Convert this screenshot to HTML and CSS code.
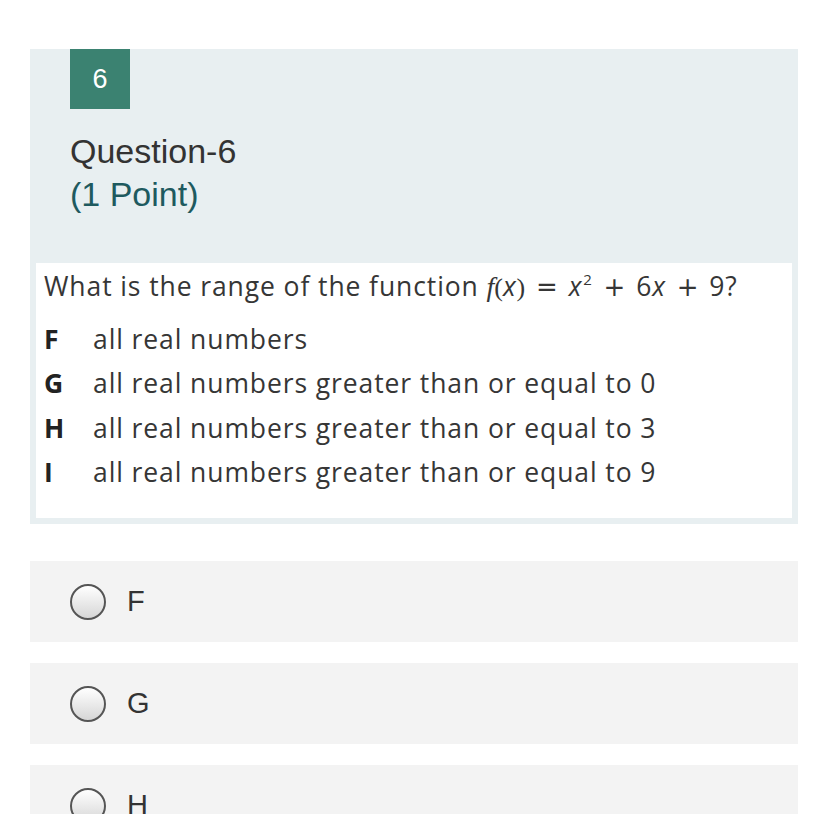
FILE: index.html
```html
<!DOCTYPE html>
<html>
<head>
<meta charset="utf-8">
<link rel="stylesheet" href="styles.css">
</head>
<body>
<div class="card">
  <div class="badge">6</div>
  <div class="title">
    <div class="qname">Question-6</div>
    <div class="points">(1 Point)</div>
  </div>
  <div class="figure">
    <div class="stem">What is the range of the function <span class="mf">f</span><span class="mp">(</span><span class="mx">x</span><span class="mp">)</span> <span class="op">=</span> <span class="mx">x</span><sup class="sq">2</sup> <span class="op">+</span> 6<span class="mx">x</span> <span class="op">+</span> 9?</div>
    <div class="choices">
      <div class="choice"><span class="key">F</span><span>all real numbers</span></div>
      <div class="choice"><span class="key">G</span><span>all real numbers greater than or equal to 0</span></div>
      <div class="choice"><span class="key">H</span><span>all real numbers greater than or equal to 3</span></div>
      <div class="choice"><span class="key">I</span><span>all real numbers greater than or equal to 9</span></div>
    </div>
  </div>
</div>
<div class="options">
  <div class="option"><span class="radio"></span><span class="label">F</span></div>
  <div class="option"><span class="radio"></span><span class="label">G</span></div>
  <div class="option"><span class="radio"></span><span class="label">H</span></div>
  <div class="option"><span class="radio"></span><span class="label">I</span></div>
</div>
</body>
</html>
```
FILE: styles.css
```css
html, body {
  margin: 0;
  padding: 0;
  background: #ffffff;
}
body {
  font-family: "Liberation Sans", Arial, sans-serif;
  color: #333333;
  width: 813px;
  overflow: hidden;
}
.card {
  margin: 49px 0 0 30px;
  width: 768px;
  background: #e8eff1;
  padding-bottom: 6px;
}
.badge {
  margin-left: 40px;
  width: 60px;
  height: 60px;
  background: #3b8271;
  color: #ffffff;
  font-size: 27px;
  display: flex;
  align-items: center;
  justify-content: center;
}
.title {
  margin: 21px 40px 0;
  font-size: 34px;
  line-height: 43px;
}
.qname {
  color: #333333;
}
.points {
  color: #1e5a5f;
}
.figure {
  margin: 47px 6px 0;
  height: 255px;
  background: #ffffff;
  padding-left: 8px;
  font-family: "Open Sans", "Noto Sans", sans-serif;
  font-size: 26.5px;
  letter-spacing: 0.9px;
  color: #363636;
}
.stem {
  line-height: 44.5px;
  white-space: nowrap;
  padding-top: 1px;
}
.mf {
  font-family: "Liberation Serif", serif;
  font-style: italic;
  font-size: 28px;
  letter-spacing: 0;
}
.mp {
  font-family: "Liberation Serif", serif;
  font-size: 26px;
  letter-spacing: 0;
}
.mx {
  font-style: italic;
}
.op {
  font-family: "DejaVu Sans", sans-serif;
  font-size: 26px;
  letter-spacing: 0;
  margin: 0 3px;
}
.sq {
  font-size: 15px;
  vertical-align: 11px;
  line-height: 0;
  margin-left: 1px;
}
.choices {
  margin-top: 6.5px;
}
.choice {
  display: flex;
  line-height: 44.3px;
  white-space: nowrap;
}
.key {
  width: 49px;
  font-weight: 700;
  color: #222222;
  letter-spacing: 0;
}
.options {
  margin: 37px 0 0 30px;
  width: 768px;
  display: flex;
  flex-direction: column;
  gap: 21px;
}
.option {
  height: 81px;
  background: #f3f3f3;
  display: flex;
  align-items: center;
  padding-left: 40px;
}
.radio {
  width: 32px;
  height: 32px;
  border: 2px solid #555555;
  border-radius: 50%;
  background: linear-gradient(#ffffff, #d6d6d6);
  flex: none;
}
.label {
  margin-left: 21px;
  font-size: 29px;
  color: #333333;
}
```
